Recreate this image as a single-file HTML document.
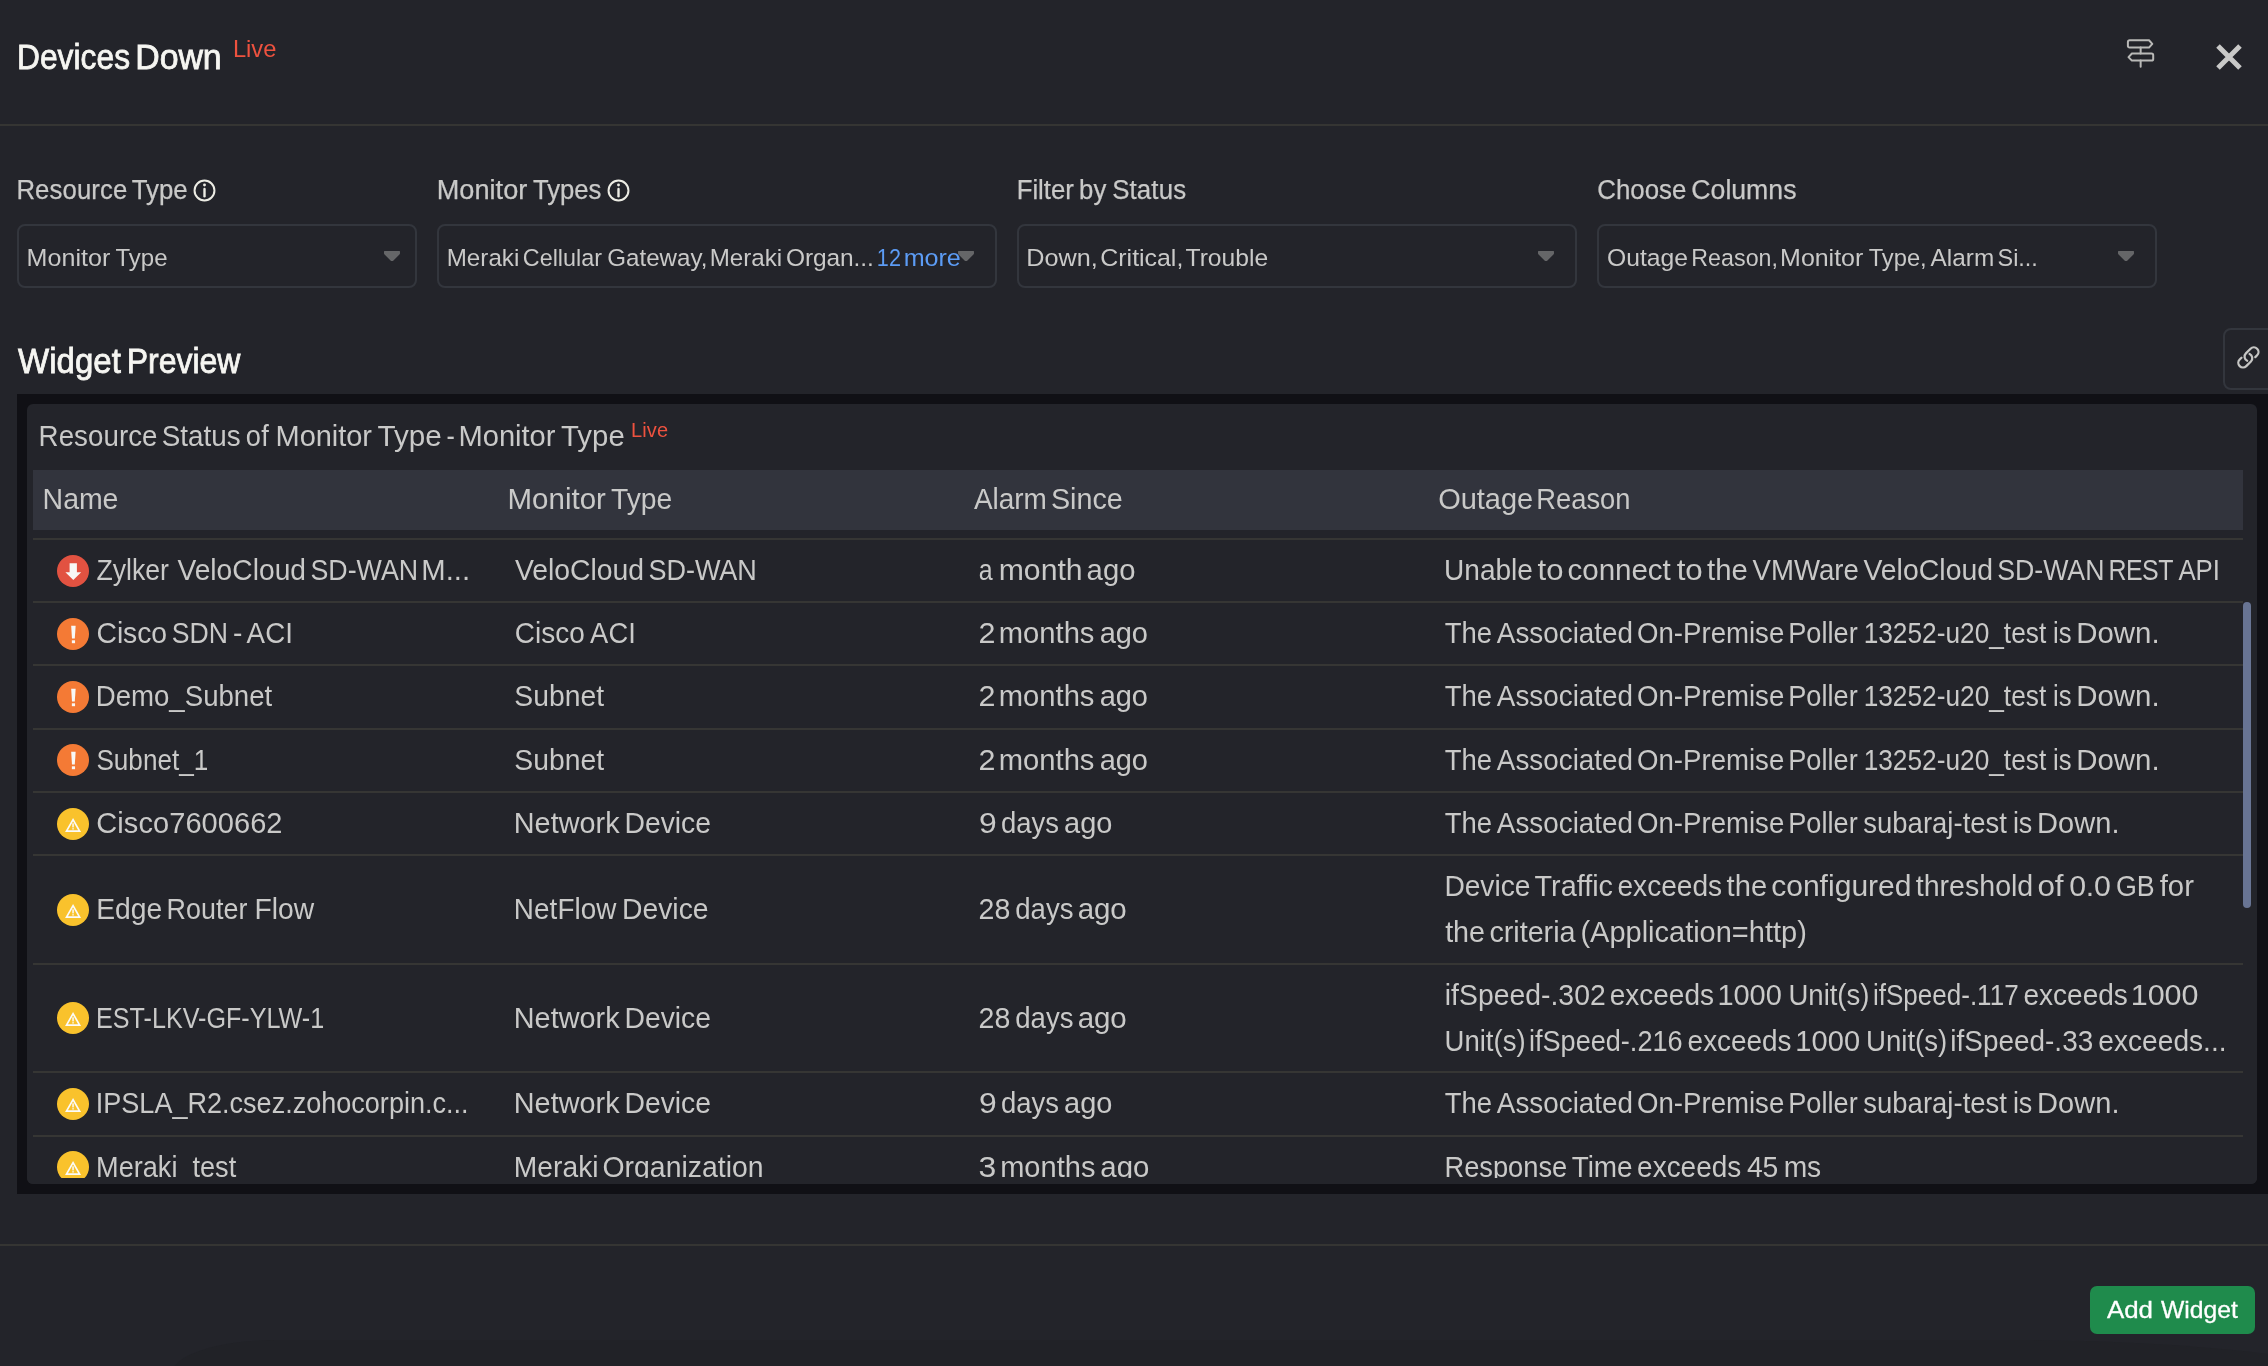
<!DOCTYPE html>
<html lang="en">
<head>
<meta charset="utf-8">
<title>Devices Down</title>
<style>
html,body{margin:0;padding:0;width:2268px;height:1366px;overflow:hidden;background:#23242a;}
#root{position:relative;width:2268px;height:1366px;overflow:hidden;background:#23242a;font-family:"Liberation Sans",sans-serif;}
.abs{position:absolute;}
.t{position:absolute;white-space:pre;font-family:"Liberation Sans",sans-serif;word-spacing:-0.065em;transform-origin:0 50%;}
.txt{position:absolute;left:0;top:0;width:2268px;height:1366px;will-change:transform;}
.hline{position:absolute;left:0;width:2268px;height:2px;background:#353533;}
.sel{position:absolute;top:224px;height:60px;border:2px solid #33363d;border-radius:8px;box-sizing:content-box;}
.arrow{position:absolute;width:16px;height:10.4px;}
.wrap{position:absolute;left:17px;top:394px;width:2251px;height:800px;background:#101015;}
.panel{position:absolute;left:27px;top:404px;width:2230px;height:780px;background:#23242a;border-radius:6px;}
.thead{position:absolute;left:33px;top:470px;width:2210px;height:60px;background:#32343d;}
.rl{position:absolute;left:33px;width:2210px;height:2px;background:#363634;}
.ic{position:absolute;left:57px;width:32px;height:32px;}
.clip{position:absolute;left:27px;top:1178px;width:2230px;height:6px;background:#23242a;border-radius:0 0 6px 6px;z-index:5;}
.clip2{position:absolute;left:17px;top:1184px;width:2251px;height:10px;background:#101015;z-index:4;}
.scroll{position:absolute;left:2243px;top:602px;width:8px;height:306px;background:#687493;border-radius:4px;}
.btn{position:absolute;left:2090px;top:1286px;width:165px;height:48px;background:#1f8b4c;border-radius:7px;}
.linkbox{position:absolute;left:2223px;top:328px;width:60px;height:58px;border:2px solid #33363d;border-radius:8px;}
.bottomshade{position:absolute;left:172px;top:1340px;width:2230px;height:90px;background:#212227;border-radius:110px 420px 0 0 / 36px 60px;}
</style>
</head>
<body>
<div id="root">
<div class="bottomshade"></div>
<div class="hline" style="top:124px"></div>
<div class="hline" style="top:1244px"></div>

<!-- header icons -->
<svg class="abs" style="left:2124px;top:36px" width="34" height="34" viewBox="0 0 34 34" fill="none" stroke="#b9b9b7" stroke-width="2" stroke-linejoin="round" stroke-linecap="round">
<path d="M5.6 4.300h19.400l3.300 3.600-3.300 3.700h-19.400a1.700 1.700 0 0 1-1.700-1.700v-3.900a1.700 1.700 0 0 1 1.700-1.700z"/>
<path d="M7.900 17.500h19.600a1.700 1.700 0 0 1 1.700 1.700v3.700a1.700 1.700 0 0 1-1.700 1.700h-19.600l-3.400-3.500z"/>
<path d="M16.650 11.600v5.900M16.650 24.600v6.200"/>
</svg>
<svg class="abs" style="left:2214.4px;top:41.700px" width="30" height="30" viewBox="0 0 30 30" fill="none" stroke="#c9c9c8" stroke-width="5">
<path d="M4 4l22 22M26 4l-22 22"/>
</svg>

<!-- info icons -->
<svg class="abs" style="left:193.1px;top:178.6px" width="23" height="23" viewBox="0 0 23 23"><circle cx="11.5" cy="11.5" r="9.950" fill="none" stroke="#ecece4" stroke-width="2"/><path d="M11.5 9.900v7.300" stroke="#ecece4" stroke-width="2.400" stroke-linecap="round"/><circle cx="11.5" cy="6.050" r="1.450" fill="#ecece4"/></svg>
<svg class="abs" style="left:607.1px;top:178.6px" width="23" height="23" viewBox="0 0 23 23"><circle cx="11.5" cy="11.5" r="9.950" fill="none" stroke="#ecece4" stroke-width="2"/><path d="M11.5 9.900v7.300" stroke="#ecece4" stroke-width="2.400" stroke-linecap="round"/><circle cx="11.5" cy="6.050" r="1.450" fill="#ecece4"/></svg>

<!-- selects -->
<div class="sel" style="left:17px;width:396px"></div>
<div class="sel" style="left:437px;width:556px"></div>
<div class="sel" style="left:1017px;width:556px"></div>
<div class="sel" style="left:1597px;width:556px"></div>
<svg class="arrow" style="left:384px;top:250.8px" viewBox="0 0 16 10.4"><path d="M0.400 0H15.600Q16 0 16 0.400V2.500Q16 2.900 15.700 3.200L9.200 9.700Q8 10.900 6.800 9.700L0.300 3.200Q0 2.900 0 2.500V0.400Q0 0 0.400 0Z" fill="#656668"/></svg>
<svg class="arrow" style="left:958px;top:250.8px" viewBox="0 0 16 10.4"><path d="M0.400 0H15.600Q16 0 16 0.400V2.500Q16 2.900 15.700 3.200L9.200 9.700Q8 10.900 6.800 9.700L0.300 3.200Q0 2.900 0 2.500V0.400Q0 0 0.400 0Z" fill="#656668"/></svg>
<svg class="arrow" style="left:1538px;top:250.8px" viewBox="0 0 16 10.4"><path d="M0.400 0H15.600Q16 0 16 0.400V2.500Q16 2.900 15.700 3.200L9.200 9.700Q8 10.900 6.800 9.700L0.300 3.200Q0 2.900 0 2.500V0.400Q0 0 0.400 0Z" fill="#656668"/></svg>
<svg class="arrow" style="left:2118px;top:250.8px" viewBox="0 0 16 10.4"><path d="M0.400 0H15.600Q16 0 16 0.400V2.500Q16 2.900 15.700 3.200L9.200 9.700Q8 10.900 6.800 9.700L0.300 3.200Q0 2.900 0 2.500V0.400Q0 0 0.400 0Z" fill="#656668"/></svg>

<!-- link box -->
<div class="linkbox"></div>
<svg class="abs" style="left:2236.4px;top:345.4px" width="24.8" height="24.8" viewBox="0 0 24 24" fill="none" stroke="#c6c6c4" stroke-width="2.2" stroke-linecap="round" stroke-linejoin="round">
<path d="M13.19 8.688a4.500 4.500 0 0 1 1.242 7.244l-4.500 4.500a4.500 4.500 0 0 1-6.364-6.364l1.757-1.757m13.350-.622 1.757-1.757a4.500 4.500 0 0 0-6.364-6.364l-4.500 4.500a4.500 4.500 0 0 0 1.242 7.244"/>
</svg>

<!-- widget -->
<div class="wrap"></div>
<div class="panel"></div>
<div class="thead"></div>
<div class="rl" style="top:538px"></div>
<div class="rl" style="top:601px"></div>
<div class="rl" style="top:664px"></div>
<div class="rl" style="top:728px"></div>
<div class="rl" style="top:791px"></div>
<div class="rl" style="top:854px"></div>
<div class="rl" style="top:963px"></div>
<div class="rl" style="top:1071px"></div>
<div class="rl" style="top:1135px"></div>
<div class="scroll"></div>

<svg class="ic" style="top:555.0px" viewBox="0 0 32 32"><circle cx="16" cy="16" r="16" fill="#e25241"/><path d="M12.600 8.200h7.300v9.000h4.300l-7.900 7.900-7.900-7.900h4.200z" fill="#f8f8f6"/></svg>
<svg class="ic" style="top:618.0px" viewBox="0 0 32 32"><circle cx="16" cy="16" r="16" fill="#f47a35"/><path d="M14.150 7.800h4.500l-.850 12.600h-2.800z" fill="#f8f8f6"/><rect x="14.850" y="22.300" width="3.200" height="2.900" fill="#f8f8f6"/></svg>
<svg class="ic" style="top:681.2px" viewBox="0 0 32 32"><circle cx="16" cy="16" r="16" fill="#f47a35"/><path d="M14.150 7.800h4.500l-.850 12.600h-2.800z" fill="#f8f8f6"/><rect x="14.850" y="22.300" width="3.200" height="2.900" fill="#f8f8f6"/></svg>
<svg class="ic" style="top:744.4px" viewBox="0 0 32 32"><circle cx="16" cy="16" r="16" fill="#f47a35"/><path d="M14.150 7.800h4.500l-.850 12.600h-2.800z" fill="#f8f8f6"/><rect x="14.850" y="22.300" width="3.200" height="2.900" fill="#f8f8f6"/></svg>
<svg class="ic" style="top:807.9px" viewBox="0 0 32 32"><circle cx="16" cy="16" r="16" fill="#f9c22c"/><path d="M16.050 11.600L22.600 23.150H9.500Z" fill="none" stroke="#fbfbf9" stroke-width="1.700" stroke-linejoin="miter"/><rect x="15.300" y="15.300" width="1.500" height="4.100" fill="#fbfbf9"/><rect x="15.300" y="20.200" width="1.500" height="1.300" fill="#fbfbf9"/></svg>
<svg class="ic" style="top:894.0px" viewBox="0 0 32 32"><circle cx="16" cy="16" r="16" fill="#f9c22c"/><path d="M16.050 11.600L22.600 23.150H9.500Z" fill="none" stroke="#fbfbf9" stroke-width="1.700" stroke-linejoin="miter"/><rect x="15.300" y="15.300" width="1.500" height="4.100" fill="#fbfbf9"/><rect x="15.300" y="20.200" width="1.500" height="1.300" fill="#fbfbf9"/></svg>
<svg class="ic" style="top:1002.1px" viewBox="0 0 32 32"><circle cx="16" cy="16" r="16" fill="#f9c22c"/><path d="M16.050 11.600L22.600 23.150H9.500Z" fill="none" stroke="#fbfbf9" stroke-width="1.700" stroke-linejoin="miter"/><rect x="15.300" y="15.300" width="1.500" height="4.100" fill="#fbfbf9"/><rect x="15.300" y="20.200" width="1.500" height="1.300" fill="#fbfbf9"/></svg>
<svg class="ic" style="top:1087.9px" viewBox="0 0 32 32"><circle cx="16" cy="16" r="16" fill="#f9c22c"/><path d="M16.050 11.600L22.600 23.150H9.500Z" fill="none" stroke="#fbfbf9" stroke-width="1.700" stroke-linejoin="miter"/><rect x="15.300" y="15.300" width="1.500" height="4.100" fill="#fbfbf9"/><rect x="15.300" y="20.200" width="1.500" height="1.300" fill="#fbfbf9"/></svg>
<svg class="ic" style="top:1151.1px" viewBox="0 0 32 32"><circle cx="16" cy="16" r="16" fill="#f9c22c"/><path d="M16.050 11.600L22.600 23.150H9.500Z" fill="none" stroke="#fbfbf9" stroke-width="1.700" stroke-linejoin="miter"/><rect x="15.300" y="15.300" width="1.500" height="4.100" fill="#fbfbf9"/><rect x="15.300" y="20.200" width="1.500" height="1.300" fill="#fbfbf9"/></svg>

<div class="btn"></div>
<div class="txt">
<span class="t" style="left:16px;top:37px;font-size:34.5px;line-height:41px;letter-spacing:0.072px;transform:translateX(0.92px) scaleX(0.9187);color:#f6f6f2;-webkit-text-stroke-width:0.8px;">Devices </span>
<span class="t" style="left:135px;top:37px;font-size:34.5px;line-height:41px;letter-spacing:-0.074px;transform:translateX(0.33px) scaleX(0.9810);color:#f6f6f2;-webkit-text-stroke-width:0.8px;">Down</span>
<span class="t" style="left:232px;top:34px;font-size:24.5px;line-height:29px;letter-spacing:-0.003px;transform:translateX(0.90px) scaleX(0.9678);color:#ee523f;">Live</span>
<span class="t" style="left:16px;top:174px;font-size:27px;line-height:32px;letter-spacing:0.108px;transform:translateX(0.43px) scaleX(0.9527);color:#c9c9c8;-webkit-text-stroke-width:0.25px;">Resource </span>
<span class="t" style="left:131px;top:174px;font-size:27px;line-height:32px;letter-spacing:0.012px;transform:translateX(0.66px) scaleX(0.9572);color:#c9c9c8;-webkit-text-stroke-width:0.25px;">Type</span>
<span class="t" style="left:436px;top:174px;font-size:27px;line-height:32px;letter-spacing:0.043px;transform:translateX(0.68px) scaleX(1.0041);color:#c9c9c8;-webkit-text-stroke-width:0.25px;">Monitor </span>
<span class="t" style="left:533px;top:174px;font-size:27px;line-height:32px;letter-spacing:-0.092px;transform:translateX(0.08px) scaleX(0.9514);color:#c9c9c8;-webkit-text-stroke-width:0.25px;">Types</span>
<span class="t" style="left:1016px;top:174px;font-size:27px;line-height:32px;letter-spacing:-0.009px;transform:translateX(0.66px) scaleX(0.9540);color:#c9c9c8;-webkit-text-stroke-width:0.25px;">Filter </span>
<span class="t" style="left:1079px;top:174px;font-size:27px;line-height:32px;letter-spacing:0.229px;transform:translateX(0.11px) scaleX(0.9520);color:#c9c9c8;-webkit-text-stroke-width:0.25px;">by </span>
<span class="t" style="left:1112px;top:174px;font-size:27px;line-height:32px;letter-spacing:0.144px;transform:translateX(0.15px) scaleX(0.9566);color:#c9c9c8;-webkit-text-stroke-width:0.25px;">Status</span>
<span class="t" style="left:1597px;top:174px;font-size:27px;line-height:32px;letter-spacing:-0.027px;transform:translateX(0.34px) scaleX(0.9574);color:#c9c9c8;-webkit-text-stroke-width:0.25px;">Choose </span>
<span class="t" style="left:1691px;top:174px;font-size:27px;line-height:32px;letter-spacing:-0.030px;transform:translateX(0.34px) scaleX(0.9887);color:#c9c9c8;-webkit-text-stroke-width:0.25px;">Columns</span>
<span class="t" style="left:26px;top:243px;font-size:24.5px;line-height:29px;letter-spacing:0.042px;transform:translateX(0.48px) scaleX(1.0233);color:#c9c9c8;">Monitor </span>
<span class="t" style="left:115px;top:243px;font-size:24.5px;line-height:29px;letter-spacing:0.021px;transform:translateX(0.38px) scaleX(0.9805);color:#c9c9c8;">Type</span>
<span class="t" style="left:446px;top:243px;font-size:24.5px;line-height:29px;letter-spacing:0.042px;transform:translateX(0.64px) scaleX(0.9865);color:#c9c9c8;">Meraki </span>
<span class="t" style="left:522px;top:243px;font-size:24.5px;line-height:29px;letter-spacing:0.018px;transform:translateX(0.76px) scaleX(0.9528);color:#c9c9c8;">Cellular </span>
<span class="t" style="left:607px;top:243px;font-size:24.5px;line-height:29px;letter-spacing:-0.013px;transform:translateX(0.35px) scaleX(0.9848);color:#c9c9c8;">Gateway, </span>
<span class="t" style="left:709px;top:243px;font-size:24.5px;line-height:29px;letter-spacing:0.037px;transform:translateX(0.64px) scaleX(0.9850);color:#c9c9c8;">Meraki </span>
<span class="t" style="left:785.90px;top:243px;font-size:24.5px;line-height:29px;letter-spacing:-0.072px;color:#c9c9c8;">Organ...</span>
<span class="t" style="left:876px;top:243px;font-size:24.5px;line-height:29px;letter-spacing:0.109px;transform:translateX(0.76px) scaleX(0.8824);color:#5c9cf5;">12 </span>
<span class="t" style="left:903px;top:243px;font-size:24.5px;line-height:29px;letter-spacing:-0.057px;transform:translateX(0.75px) scaleX(1.0254);color:#5c9cf5;">more</span>
<span class="t" style="left:1026px;top:243px;font-size:24.5px;line-height:29px;letter-spacing:-0.003px;transform:translateX(0.22px) scaleX(1.0292);color:#c9c9c8;">Down, </span>
<span class="t" style="left:1100px;top:243px;font-size:24.5px;line-height:29px;letter-spacing:-0.011px;transform:translateX(0.33px) scaleX(1.0171);color:#c9c9c8;">Critical, </span>
<span class="t" style="left:1185px;top:243px;font-size:24.5px;line-height:29px;letter-spacing:-0.012px;transform:translateX(0.53px) scaleX(1.0062);color:#c9c9c8;">Trouble</span>
<span class="t" style="left:1606px;top:243px;font-size:24.5px;line-height:29px;letter-spacing:0.026px;transform:translateX(0.95px) scaleX(1.0067);color:#c9c9c8;">Outage </span>
<span class="t" style="left:1691px;top:243px;font-size:24.5px;line-height:29px;letter-spacing:0.051px;transform:translateX(0.33px) scaleX(0.9461);color:#c9c9c8;">Reason, </span>
<span class="t" style="left:1780px;top:243px;font-size:24.5px;line-height:29px;letter-spacing:-0.006px;transform:translateX(0.10px) scaleX(1.0185);color:#c9c9c8;">Monitor </span>
<span class="t" style="left:1868px;top:243px;font-size:24.5px;line-height:29px;letter-spacing:-0.006px;transform:translateX(0.68px) scaleX(0.9687);color:#c9c9c8;">Type, </span>
<span class="t" style="left:1930px;top:243px;font-size:24.5px;line-height:29px;letter-spacing:0.024px;transform:translateX(0.62px) scaleX(0.9928);color:#c9c9c8;">Alarm </span>
<span class="t" style="left:1997px;top:243px;font-size:24.5px;line-height:29px;letter-spacing:-0.014px;transform:translateX(0.51px) scaleX(0.9568);color:#c9c9c8;">Si...</span>
<span class="t" style="left:18px;top:341px;font-size:34.5px;line-height:41px;letter-spacing:0.034px;transform:translateX(0.12px) scaleX(0.9555);color:#f6f6f2;-webkit-text-stroke-width:0.8px;">Widget </span>
<span class="t" style="left:126px;top:341px;font-size:34.5px;line-height:41px;letter-spacing:-0.019px;transform:translateX(0.80px) scaleX(0.9264);color:#f6f6f2;-webkit-text-stroke-width:0.8px;">Preview</span>
<span class="t" style="left:38px;top:419px;font-size:29px;line-height:35px;letter-spacing:0.043px;transform:translateX(0.62px) scaleX(0.9552);color:#c9c9c8;">Resource </span>
<span class="t" style="left:161px;top:419px;font-size:29px;line-height:35px;letter-spacing:0.031px;transform:translateX(0.77px) scaleX(0.9592);color:#c9c9c8;">Status </span>
<span class="t" style="left:245px;top:419px;font-size:29px;line-height:35px;letter-spacing:0.305px;transform:translateX(0.80px) scaleX(0.9395);color:#c9c9c8;">of </span>
<span class="t" style="left:275.56px;top:419px;font-size:29px;line-height:35px;letter-spacing:-0.036px;color:#c9c9c8;">Monitor </span>
<span class="t" style="left:377px;top:419px;font-size:29px;line-height:35px;letter-spacing:0.019px;transform:translateX(0.47px) scaleX(1.0227);color:#c9c9c8;">Type </span>
<span class="t" style="left:446px;top:419px;font-size:29px;line-height:35px;letter-spacing:0.000px;transform:translateX(0.50px) scaleX(0.8600);color:#c9c9c8;">- </span>
<span class="t" style="left:458px;top:419px;font-size:29px;line-height:35px;letter-spacing:-0.054px;transform:translateX(0.59px) scaleX(1.0050);color:#c9c9c8;">Monitor </span>
<span class="t" style="left:560px;top:419px;font-size:29px;line-height:35px;letter-spacing:0.058px;transform:translateX(1.00px) scaleX(1.0115);color:#c9c9c8;">Type</span>
<span class="t" style="left:630px;top:417px;font-size:21px;line-height:25px;letter-spacing:0.141px;transform:translateX(0.89px) scaleX(0.9542);color:#ee523f;">Live</span>
<span class="t" style="left:42px;top:482px;font-size:29px;line-height:35px;letter-spacing:-0.049px;transform:translateX(0.62px) scaleX(0.9821);color:#c9c9c8;">Name</span>
<span class="t" style="left:507px;top:482px;font-size:29px;line-height:35px;letter-spacing:0.001px;transform:translateX(0.54px) scaleX(1.0170);color:#c9c9c8;">Monitor </span>
<span class="t" style="left:610px;top:482px;font-size:29px;line-height:35px;letter-spacing:0.007px;transform:translateX(0.94px) scaleX(0.9743);color:#c9c9c8;">Type</span>
<span class="t" style="left:973px;top:482px;font-size:29px;line-height:35px;letter-spacing:-0.036px;transform:translateX(0.90px) scaleX(0.9641);color:#c9c9c8;">Alarm </span>
<span class="t" style="left:1050px;top:482px;font-size:29px;line-height:35px;letter-spacing:0.016px;transform:translateX(0.93px) scaleX(0.9904);color:#c9c9c8;">Since</span>
<span class="t" style="left:1438.14px;top:482px;font-size:29px;line-height:35px;letter-spacing:-0.014px;color:#c9c9c8;">Outage </span>
<span class="t" style="left:1536px;top:482px;font-size:29px;line-height:35px;letter-spacing:0.005px;transform:translateX(0.29px) scaleX(0.9412);color:#c9c9c8;">Reason</span>
<span class="t" style="left:96px;top:553px;font-size:29px;line-height:35px;letter-spacing:-0.022px;transform:translateX(0.42px) scaleX(0.9191);color:#c9c9c8;">Zylker </span>
<span class="t" style="left:177px;top:553px;font-size:29px;line-height:35px;letter-spacing:0.021px;transform:translateX(0.38px) scaleX(0.9716);color:#c9c9c8;">VeloCloud </span>
<span class="t" style="left:310px;top:553px;font-size:29px;line-height:35px;letter-spacing:-0.014px;transform:translateX(0.48px) scaleX(0.9242);color:#c9c9c8;">SD-WAN </span>
<span class="t" style="left:421px;top:553px;font-size:29px;line-height:35px;letter-spacing:-0.028px;transform:translateX(0.30px) scaleX(1.0100);color:#c9c9c8;">M...</span>
<span class="t" style="left:96px;top:616px;font-size:29px;line-height:35px;letter-spacing:-0.069px;transform:translateX(0.50px) scaleX(0.9764);color:#c9c9c8;">Cisco </span>
<span class="t" style="left:171px;top:616px;font-size:29px;line-height:35px;letter-spacing:-0.043px;transform:translateX(0.82px) scaleX(0.9183);color:#c9c9c8;">SDN </span>
<span class="t" style="left:233px;top:616px;font-size:29px;line-height:35px;letter-spacing:0.000px;transform:translateX(0.12px) scaleX(0.9728);color:#c9c9c8;">- </span>
<span class="t" style="left:246px;top:616px;font-size:29px;line-height:35px;letter-spacing:0.115px;transform:translateX(0.59px) scaleX(0.9551);color:#c9c9c8;">ACI</span>
<span class="t" style="left:95px;top:679px;font-size:29px;line-height:35px;letter-spacing:-0.009px;transform:translateX(0.72px) scaleX(0.9524);color:#c9c9c8;">Demo_Subnet</span>
<span class="t" style="left:96px;top:743px;font-size:29px;line-height:35px;letter-spacing:-0.017px;transform:translateX(0.47px) scaleX(0.9003);color:#c9c9c8;">Subnet_1</span>
<span class="t" style="left:96.37px;top:806px;font-size:29px;line-height:35px;letter-spacing:0.063px;color:#c9c9c8;">Cisco7600662</span>
<span class="t" style="left:96px;top:892px;font-size:29px;line-height:35px;letter-spacing:0.008px;transform:translateX(0.16px) scaleX(0.9751);color:#c9c9c8;">Edge </span>
<span class="t" style="left:166px;top:892px;font-size:29px;line-height:35px;letter-spacing:0.025px;transform:translateX(0.59px) scaleX(0.9267);color:#c9c9c8;">Router </span>
<span class="t" style="left:254px;top:892px;font-size:29px;line-height:35px;letter-spacing:-0.036px;transform:translateX(0.53px) scaleX(0.9745);color:#c9c9c8;">Flow</span>
<span class="t" style="left:96px;top:1001px;font-size:29px;line-height:35px;letter-spacing:-0.012px;transform:translateX(0.04px) scaleX(0.8673);color:#c9c9c8;">EST-LKV-GF-YLW-1</span>
<span class="t" style="left:95px;top:1086px;font-size:29px;line-height:35px;letter-spacing:0.001px;transform:translateX(0.78px) scaleX(0.9324);color:#c9c9c8;">IPSLA_R2.csez.zohocorpin.c...</span>
<span class="t" style="left:96px;top:1150px;font-size:29px;line-height:35px;letter-spacing:-0.013px;transform:translateX(0.10px) scaleX(0.9354);color:#c9c9c8;">Meraki_test</span>
<span class="t" style="left:514px;top:553px;font-size:29px;line-height:35px;letter-spacing:-0.023px;transform:translateX(0.93px) scaleX(0.9784);color:#c9c9c8;">VeloCloud </span>
<span class="t" style="left:648px;top:553px;font-size:29px;line-height:35px;letter-spacing:-0.051px;transform:translateX(0.56px) scaleX(0.9313);color:#c9c9c8;">SD-WAN</span>
<span class="t" style="left:514px;top:616px;font-size:29px;line-height:35px;letter-spacing:0.040px;transform:translateX(0.71px) scaleX(0.9650);color:#c9c9c8;">Cisco </span>
<span class="t" style="left:590px;top:616px;font-size:29px;line-height:35px;letter-spacing:0.083px;transform:translateX(0.11px) scaleX(0.9420);color:#c9c9c8;">ACI</span>
<span class="t" style="left:514px;top:679px;font-size:29px;line-height:35px;letter-spacing:0.001px;transform:translateX(0.37px) scaleX(0.9759);color:#c9c9c8;">Subnet</span>
<span class="t" style="left:514px;top:743px;font-size:29px;line-height:35px;letter-spacing:0.001px;transform:translateX(0.37px) scaleX(0.9759);color:#c9c9c8;">Subnet</span>
<span class="t" style="left:513px;top:806px;font-size:29px;line-height:35px;letter-spacing:0.038px;transform:translateX(0.70px) scaleX(0.9941);color:#c9c9c8;">Network </span>
<span class="t" style="left:624px;top:806px;font-size:29px;line-height:35px;letter-spacing:-0.038px;transform:translateX(0.51px) scaleX(0.9765);color:#c9c9c8;">Device</span>
<span class="t" style="left:513px;top:1001px;font-size:29px;line-height:35px;letter-spacing:0.038px;transform:translateX(0.70px) scaleX(0.9941);color:#c9c9c8;">Network </span>
<span class="t" style="left:624px;top:1001px;font-size:29px;line-height:35px;letter-spacing:-0.038px;transform:translateX(0.51px) scaleX(0.9765);color:#c9c9c8;">Device</span>
<span class="t" style="left:513px;top:1086px;font-size:29px;line-height:35px;letter-spacing:0.038px;transform:translateX(0.70px) scaleX(0.9941);color:#c9c9c8;">Network </span>
<span class="t" style="left:624px;top:1086px;font-size:29px;line-height:35px;letter-spacing:-0.038px;transform:translateX(0.51px) scaleX(0.9765);color:#c9c9c8;">Device</span>
<span class="t" style="left:513px;top:892px;font-size:29px;line-height:35px;letter-spacing:0.055px;transform:translateX(0.83px) scaleX(0.9614);color:#c9c9c8;">NetFlow </span>
<span class="t" style="left:621px;top:892px;font-size:29px;line-height:35px;letter-spacing:0.022px;transform:translateX(0.95px) scaleX(0.9761);color:#c9c9c8;">Device</span>
<span class="t" style="left:513px;top:1150px;font-size:29px;line-height:35px;letter-spacing:0.074px;transform:translateX(0.72px) scaleX(0.9715);color:#c9c9c8;">Meraki </span>
<span class="t" style="left:602px;top:1150px;font-size:29px;line-height:35px;letter-spacing:0.016px;transform:translateX(0.51px) scaleX(0.9784);color:#c9c9c8;">Organization</span>
<span class="t" style="left:978px;top:553px;font-size:29px;line-height:35px;letter-spacing:0.000px;transform:translateX(0.85px) scaleX(0.8600);color:#c9c9c8;">a </span>
<span class="t" style="left:998px;top:553px;font-size:29px;line-height:35px;letter-spacing:-0.004px;transform:translateX(0.70px) scaleX(1.0414);color:#c9c9c8;">month </span>
<span class="t" style="left:1086px;top:553px;font-size:29px;line-height:35px;letter-spacing:-0.004px;transform:translateX(0.60px) scaleX(1.0098);color:#c9c9c8;">ago</span>
<span class="t" style="left:978px;top:616px;font-size:29px;line-height:35px;letter-spacing:0.000px;transform:translateX(0.49px) scaleX(1.0509);color:#c9c9c8;">2 </span>
<span class="t" style="left:998px;top:616px;font-size:29px;line-height:35px;letter-spacing:-0.009px;transform:translateX(0.79px) scaleX(1.0064);color:#c9c9c8;">months </span>
<span class="t" style="left:1099.64px;top:616px;font-size:29px;line-height:35px;letter-spacing:-0.023px;color:#c9c9c8;">ago</span>
<span class="t" style="left:978px;top:679px;font-size:29px;line-height:35px;letter-spacing:0.000px;transform:translateX(0.49px) scaleX(1.0509);color:#c9c9c8;">2 </span>
<span class="t" style="left:998px;top:679px;font-size:29px;line-height:35px;letter-spacing:-0.009px;transform:translateX(0.79px) scaleX(1.0064);color:#c9c9c8;">months </span>
<span class="t" style="left:1099.64px;top:679px;font-size:29px;line-height:35px;letter-spacing:-0.023px;color:#c9c9c8;">ago</span>
<span class="t" style="left:978px;top:743px;font-size:29px;line-height:35px;letter-spacing:0.000px;transform:translateX(0.49px) scaleX(1.0509);color:#c9c9c8;">2 </span>
<span class="t" style="left:998px;top:743px;font-size:29px;line-height:35px;letter-spacing:-0.009px;transform:translateX(0.79px) scaleX(1.0064);color:#c9c9c8;">months </span>
<span class="t" style="left:1099.64px;top:743px;font-size:29px;line-height:35px;letter-spacing:-0.023px;color:#c9c9c8;">ago</span>
<span class="t" style="left:978px;top:806px;font-size:29px;line-height:35px;letter-spacing:0.000px;transform:translateX(0.96px) scaleX(1.1000);color:#c9c9c8;">9 </span>
<span class="t" style="left:1000px;top:806px;font-size:29px;line-height:35px;letter-spacing:-0.008px;transform:translateX(0.92px) scaleX(0.9473);color:#c9c9c8;">days </span>
<span class="t" style="left:1063.91px;top:806px;font-size:29px;line-height:35px;letter-spacing:0.102px;color:#c9c9c8;">ago</span>
<span class="t" style="left:978px;top:1086px;font-size:29px;line-height:35px;letter-spacing:0.000px;transform:translateX(0.96px) scaleX(1.1000);color:#c9c9c8;">9 </span>
<span class="t" style="left:1000px;top:1086px;font-size:29px;line-height:35px;letter-spacing:-0.008px;transform:translateX(0.92px) scaleX(0.9473);color:#c9c9c8;">days </span>
<span class="t" style="left:1063.91px;top:1086px;font-size:29px;line-height:35px;letter-spacing:0.102px;color:#c9c9c8;">ago</span>
<span class="t" style="left:978px;top:892px;font-size:29px;line-height:35px;letter-spacing:0.150px;transform:translateX(0.60px) scaleX(0.9830);color:#c9c9c8;">28 </span>
<span class="t" style="left:1015px;top:892px;font-size:29px;line-height:35px;letter-spacing:0.047px;transform:translateX(0.24px) scaleX(0.9504);color:#c9c9c8;">days </span>
<span class="t" style="left:1077px;top:892px;font-size:29px;line-height:35px;letter-spacing:-0.141px;transform:translateX(0.73px) scaleX(1.0185);color:#c9c9c8;">ago</span>
<span class="t" style="left:978px;top:1001px;font-size:29px;line-height:35px;letter-spacing:0.150px;transform:translateX(0.60px) scaleX(0.9830);color:#c9c9c8;">28 </span>
<span class="t" style="left:1015px;top:1001px;font-size:29px;line-height:35px;letter-spacing:0.047px;transform:translateX(0.24px) scaleX(0.9504);color:#c9c9c8;">days </span>
<span class="t" style="left:1077px;top:1001px;font-size:29px;line-height:35px;letter-spacing:-0.141px;transform:translateX(0.73px) scaleX(1.0185);color:#c9c9c8;">ago</span>
<span class="t" style="left:978px;top:1150px;font-size:29px;line-height:35px;letter-spacing:0.000px;transform:translateX(0.55px) scaleX(1.0987);color:#c9c9c8;">3 </span>
<span class="t" style="left:1000.18px;top:1150px;font-size:29px;line-height:35px;letter-spacing:0.033px;color:#c9c9c8;">months </span>
<span class="t" style="left:1100px;top:1150px;font-size:29px;line-height:35px;letter-spacing:0.048px;transform:translateX(0.27px) scaleX(1.0149);color:#c9c9c8;">ago</span>
<span class="t" style="left:1444px;top:553px;font-size:29px;line-height:35px;letter-spacing:-0.028px;transform:translateX(0.08px) scaleX(0.9673);color:#c9c9c8;">Unable </span>
<span class="t" style="left:1537px;top:553px;font-size:29px;line-height:35px;letter-spacing:-0.101px;transform:translateX(0.61px) scaleX(1.0718);color:#c9c9c8;">to </span>
<span class="t" style="left:1567px;top:553px;font-size:29px;line-height:35px;letter-spacing:-0.062px;transform:translateX(0.54px) scaleX(1.0201);color:#c9c9c8;">connect </span>
<span class="t" style="left:1676px;top:553px;font-size:29px;line-height:35px;letter-spacing:-0.305px;transform:translateX(0.84px) scaleX(1.0815);color:#c9c9c8;">to </span>
<span class="t" style="left:1707px;top:553px;font-size:29px;line-height:35px;letter-spacing:-0.041px;transform:translateX(0.10px) scaleX(1.0095);color:#c9c9c8;">the </span>
<span class="t" style="left:1752px;top:553px;font-size:29px;line-height:35px;letter-spacing:-0.020px;transform:translateX(0.53px) scaleX(0.9516);color:#c9c9c8;">VMWare </span>
<span class="t" style="left:1863px;top:553px;font-size:29px;line-height:35px;letter-spacing:0.036px;transform:translateX(0.38px) scaleX(0.9793);color:#c9c9c8;">VeloCloud </span>
<span class="t" style="left:1997px;top:553px;font-size:29px;line-height:35px;letter-spacing:-0.012px;transform:translateX(0.17px) scaleX(0.9211);color:#c9c9c8;">SD-WAN </span>
<span class="t" style="left:2108px;top:553px;font-size:29px;line-height:35px;letter-spacing:-0.619px;transform:translateX(0.49px) scaleX(0.8600);color:#c9c9c8;">REST </span>
<span class="t" style="left:2178px;top:553px;font-size:29px;line-height:35px;letter-spacing:-0.008px;transform:translateX(0.40px) scaleX(0.8894);color:#c9c9c8;">API</span>
<span class="t" style="left:1444px;top:616px;font-size:29px;line-height:35px;letter-spacing:-0.103px;transform:translateX(0.83px) scaleX(0.9485);color:#c9c9c8;">The </span>
<span class="t" style="left:1496px;top:616px;font-size:29px;line-height:35px;letter-spacing:0.003px;transform:translateX(0.86px) scaleX(0.9599);color:#c9c9c8;">Associated </span>
<span class="t" style="left:1637px;top:616px;font-size:29px;line-height:35px;letter-spacing:-0.008px;transform:translateX(0.02px) scaleX(0.9524);color:#c9c9c8;">On-Premise </span>
<span class="t" style="left:1788px;top:616px;font-size:29px;line-height:35px;letter-spacing:0.041px;transform:translateX(0.14px) scaleX(0.9356);color:#c9c9c8;">Poller </span>
<span class="t" style="left:1863px;top:616px;font-size:29px;line-height:35px;letter-spacing:0.002px;transform:translateX(0.66px) scaleX(0.9055);color:#c9c9c8;">13252-u20_test </span>
<span class="t" style="left:2053px;top:616px;font-size:29px;line-height:35px;letter-spacing:-0.106px;transform:translateX(0.07px) scaleX(0.8843);color:#c9c9c8;">is </span>
<span class="t" style="left:2076px;top:616px;font-size:29px;line-height:35px;letter-spacing:0.044px;transform:translateX(0.19px) scaleX(1.0132);color:#c9c9c8;">Down.</span>
<span class="t" style="left:1444px;top:679px;font-size:29px;line-height:35px;letter-spacing:-0.103px;transform:translateX(0.83px) scaleX(0.9485);color:#c9c9c8;">The </span>
<span class="t" style="left:1496px;top:679px;font-size:29px;line-height:35px;letter-spacing:0.003px;transform:translateX(0.86px) scaleX(0.9599);color:#c9c9c8;">Associated </span>
<span class="t" style="left:1637px;top:679px;font-size:29px;line-height:35px;letter-spacing:-0.008px;transform:translateX(0.02px) scaleX(0.9524);color:#c9c9c8;">On-Premise </span>
<span class="t" style="left:1788px;top:679px;font-size:29px;line-height:35px;letter-spacing:0.041px;transform:translateX(0.14px) scaleX(0.9356);color:#c9c9c8;">Poller </span>
<span class="t" style="left:1863px;top:679px;font-size:29px;line-height:35px;letter-spacing:0.002px;transform:translateX(0.66px) scaleX(0.9055);color:#c9c9c8;">13252-u20_test </span>
<span class="t" style="left:2053px;top:679px;font-size:29px;line-height:35px;letter-spacing:-0.106px;transform:translateX(0.07px) scaleX(0.8843);color:#c9c9c8;">is </span>
<span class="t" style="left:2076px;top:679px;font-size:29px;line-height:35px;letter-spacing:0.044px;transform:translateX(0.19px) scaleX(1.0132);color:#c9c9c8;">Down.</span>
<span class="t" style="left:1444px;top:743px;font-size:29px;line-height:35px;letter-spacing:-0.103px;transform:translateX(0.83px) scaleX(0.9485);color:#c9c9c8;">The </span>
<span class="t" style="left:1496px;top:743px;font-size:29px;line-height:35px;letter-spacing:0.003px;transform:translateX(0.86px) scaleX(0.9599);color:#c9c9c8;">Associated </span>
<span class="t" style="left:1637px;top:743px;font-size:29px;line-height:35px;letter-spacing:-0.008px;transform:translateX(0.02px) scaleX(0.9524);color:#c9c9c8;">On-Premise </span>
<span class="t" style="left:1788px;top:743px;font-size:29px;line-height:35px;letter-spacing:0.041px;transform:translateX(0.14px) scaleX(0.9356);color:#c9c9c8;">Poller </span>
<span class="t" style="left:1863px;top:743px;font-size:29px;line-height:35px;letter-spacing:0.002px;transform:translateX(0.66px) scaleX(0.9055);color:#c9c9c8;">13252-u20_test </span>
<span class="t" style="left:2053px;top:743px;font-size:29px;line-height:35px;letter-spacing:-0.106px;transform:translateX(0.07px) scaleX(0.8843);color:#c9c9c8;">is </span>
<span class="t" style="left:2076px;top:743px;font-size:29px;line-height:35px;letter-spacing:0.044px;transform:translateX(0.19px) scaleX(1.0132);color:#c9c9c8;">Down.</span>
<span class="t" style="left:1444px;top:806px;font-size:29px;line-height:35px;letter-spacing:-0.103px;transform:translateX(0.83px) scaleX(0.9485);color:#c9c9c8;">The </span>
<span class="t" style="left:1496px;top:806px;font-size:29px;line-height:35px;letter-spacing:0.003px;transform:translateX(0.86px) scaleX(0.9599);color:#c9c9c8;">Associated </span>
<span class="t" style="left:1637px;top:806px;font-size:29px;line-height:35px;letter-spacing:-0.008px;transform:translateX(0.02px) scaleX(0.9524);color:#c9c9c8;">On-Premise </span>
<span class="t" style="left:1788px;top:806px;font-size:29px;line-height:35px;letter-spacing:0.041px;transform:translateX(0.14px) scaleX(0.9356);color:#c9c9c8;">Poller </span>
<span class="t" style="left:1863px;top:806px;font-size:29px;line-height:35px;letter-spacing:0.022px;transform:translateX(0.28px) scaleX(0.9467);color:#c9c9c8;">subaraj-test </span>
<span class="t" style="left:2012px;top:806px;font-size:29px;line-height:35px;letter-spacing:-0.101px;transform:translateX(0.89px) scaleX(0.9285);color:#c9c9c8;">is </span>
<span class="t" style="left:2036.91px;top:806px;font-size:29px;line-height:35px;letter-spacing:0.114px;color:#c9c9c8;">Down.</span>
<span class="t" style="left:1444px;top:1086px;font-size:29px;line-height:35px;letter-spacing:-0.103px;transform:translateX(0.83px) scaleX(0.9485);color:#c9c9c8;">The </span>
<span class="t" style="left:1496px;top:1086px;font-size:29px;line-height:35px;letter-spacing:0.003px;transform:translateX(0.86px) scaleX(0.9599);color:#c9c9c8;">Associated </span>
<span class="t" style="left:1637px;top:1086px;font-size:29px;line-height:35px;letter-spacing:-0.008px;transform:translateX(0.02px) scaleX(0.9524);color:#c9c9c8;">On-Premise </span>
<span class="t" style="left:1788px;top:1086px;font-size:29px;line-height:35px;letter-spacing:0.041px;transform:translateX(0.14px) scaleX(0.9356);color:#c9c9c8;">Poller </span>
<span class="t" style="left:1863px;top:1086px;font-size:29px;line-height:35px;letter-spacing:0.022px;transform:translateX(0.28px) scaleX(0.9467);color:#c9c9c8;">subaraj-test </span>
<span class="t" style="left:2012px;top:1086px;font-size:29px;line-height:35px;letter-spacing:-0.101px;transform:translateX(0.89px) scaleX(0.9285);color:#c9c9c8;">is </span>
<span class="t" style="left:2036.91px;top:1086px;font-size:29px;line-height:35px;letter-spacing:0.114px;color:#c9c9c8;">Down.</span>
<span class="t" style="left:1444px;top:869px;font-size:29px;line-height:35px;letter-spacing:-0.041px;transform:translateX(0.38px) scaleX(0.9730);color:#c9c9c8;">Device </span>
<span class="t" style="left:1534px;top:869px;font-size:29px;line-height:35px;letter-spacing:0.018px;transform:translateX(0.55px) scaleX(0.9923);color:#c9c9c8;">Traffic </span>
<span class="t" style="left:1617px;top:869px;font-size:29px;line-height:35px;letter-spacing:-0.026px;transform:translateX(0.49px) scaleX(0.9694);color:#c9c9c8;">exceeds </span>
<span class="t" style="left:1726px;top:869px;font-size:29px;line-height:35px;letter-spacing:0.023px;transform:translateX(0.62px) scaleX(1.0048);color:#c9c9c8;">the </span>
<span class="t" style="left:1771px;top:869px;font-size:29px;line-height:35px;letter-spacing:-0.003px;transform:translateX(0.13px) scaleX(1.0373);color:#c9c9c8;">configured </span>
<span class="t" style="left:1915px;top:869px;font-size:29px;line-height:35px;letter-spacing:-0.016px;transform:translateX(0.80px) scaleX(0.9855);color:#c9c9c8;">threshold </span>
<span class="t" style="left:2037px;top:869px;font-size:29px;line-height:35px;letter-spacing:-0.288px;transform:translateX(0.55px) scaleX(1.0835);color:#c9c9c8;">of </span>
<span class="t" style="left:2069px;top:869px;font-size:29px;line-height:35px;letter-spacing:-0.175px;transform:translateX(0.13px) scaleX(1.0448);color:#c9c9c8;">0.0 </span>
<span class="t" style="left:2115px;top:869px;font-size:29px;line-height:35px;letter-spacing:-0.049px;transform:translateX(0.91px) scaleX(0.9245);color:#c9c9c8;">GB </span>
<span class="t" style="left:2159px;top:869px;font-size:29px;line-height:35px;letter-spacing:0.038px;transform:translateX(0.68px) scaleX(1.0111);color:#c9c9c8;">for</span>
<span class="t" style="left:1445px;top:915px;font-size:29px;line-height:35px;letter-spacing:-0.036px;transform:translateX(0.14px) scaleX(0.9898);color:#c9c9c8;">the </span>
<span class="t" style="left:1489px;top:915px;font-size:29px;line-height:35px;letter-spacing:-0.031px;transform:translateX(0.48px) scaleX(0.9911);color:#c9c9c8;">criteria </span>
<span class="t" style="left:1580.41px;top:915px;font-size:29px;line-height:35px;letter-spacing:-0.006px;color:#c9c9c8;">(Application=http)</span>
<span class="t" style="left:1444px;top:978px;font-size:29px;line-height:35px;letter-spacing:0.027px;transform:translateX(0.75px) scaleX(0.9768);color:#c9c9c8;">ifSpeed-.302 </span>
<span class="t" style="left:1609px;top:978px;font-size:29px;line-height:35px;letter-spacing:0.016px;transform:translateX(0.66px) scaleX(0.9653);color:#c9c9c8;">exceeds </span>
<span class="t" style="left:1717.39px;top:978px;font-size:29px;line-height:35px;letter-spacing:-0.035px;color:#c9c9c8;">1000 </span>
<span class="t" style="left:1788px;top:978px;font-size:29px;line-height:35px;letter-spacing:-0.048px;transform:translateX(0.54px) scaleX(0.9492);color:#c9c9c8;">Unit(s) </span>
<span class="t" style="left:1872px;top:978px;font-size:29px;line-height:35px;letter-spacing:0.000px;transform:translateX(0.94px) scaleX(0.8975);color:#c9c9c8;">ifSpeed-.117 </span>
<span class="t" style="left:2023px;top:978px;font-size:29px;line-height:35px;letter-spacing:-0.005px;transform:translateX(0.51px) scaleX(0.9665);color:#c9c9c8;">exceeds </span>
<span class="t" style="left:2130px;top:978px;font-size:29px;line-height:35px;letter-spacing:-0.032px;transform:translateX(0.75px) scaleX(1.0508);color:#c9c9c8;">1000</span>
<span class="t" style="left:1444px;top:1024px;font-size:29px;line-height:35px;letter-spacing:0.003px;transform:translateX(0.50px) scaleX(0.9492);color:#c9c9c8;">Unit(s) </span>
<span class="t" style="left:1528px;top:1024px;font-size:29px;line-height:35px;letter-spacing:0.004px;transform:translateX(0.93px) scaleX(0.9342);color:#c9c9c8;">ifSpeed-.216 </span>
<span class="t" style="left:1687px;top:1024px;font-size:29px;line-height:35px;letter-spacing:-0.020px;transform:translateX(0.61px) scaleX(0.9633);color:#c9c9c8;">exceeds </span>
<span class="t" style="left:1795.36px;top:1024px;font-size:29px;line-height:35px;letter-spacing:0.095px;color:#c9c9c8;">1000 </span>
<span class="t" style="left:1866px;top:1024px;font-size:29px;line-height:35px;letter-spacing:0.001px;transform:translateX(0.02px) scaleX(0.9519);color:#c9c9c8;">Unit(s) </span>
<span class="t" style="left:1950px;top:1024px;font-size:29px;line-height:35px;letter-spacing:0.018px;transform:translateX(0.37px) scaleX(0.9616);color:#c9c9c8;">ifSpeed-.33 </span>
<span class="t" style="left:2098px;top:1024px;font-size:29px;line-height:35px;letter-spacing:0.024px;transform:translateX(0.28px) scaleX(0.9691);color:#c9c9c8;">exceeds...</span>
<span class="t" style="left:1444px;top:1150px;font-size:29px;line-height:35px;letter-spacing:-0.032px;transform:translateX(0.51px) scaleX(0.9410);color:#c9c9c8;">Response </span>
<span class="t" style="left:1571px;top:1150px;font-size:29px;line-height:35px;letter-spacing:-0.024px;transform:translateX(0.68px) scaleX(0.9633);color:#c9c9c8;">Time </span>
<span class="t" style="left:1637px;top:1150px;font-size:29px;line-height:35px;letter-spacing:0.013px;transform:translateX(0.09px) scaleX(0.9637);color:#c9c9c8;">exceeds </span>
<span class="t" style="left:1746px;top:1150px;font-size:29px;line-height:35px;letter-spacing:-0.036px;transform:translateX(0.89px) scaleX(0.9769);color:#c9c9c8;">45 </span>
<span class="t" style="left:1783px;top:1150px;font-size:29px;line-height:35px;letter-spacing:-0.145px;transform:translateX(0.75px) scaleX(0.9726);color:#c9c9c8;">ms</span>
<span class="t" style="left:2107px;top:1295px;font-size:24.5px;line-height:29px;letter-spacing:-0.160px;transform:translateX(0.05px) scaleX(1.0568);color:#ffffff;-webkit-text-stroke-width:0.3px;">Add </span>
<span class="t" style="left:2160px;top:1295px;font-size:24.5px;line-height:29px;letter-spacing:0.007px;transform:translateX(0.98px) scaleX(1.0089);color:#ffffff;-webkit-text-stroke-width:0.3px;">Widget</span>
</div>

<div class="clip"></div>
<div class="clip2"></div>
</div>
</body>
</html>
